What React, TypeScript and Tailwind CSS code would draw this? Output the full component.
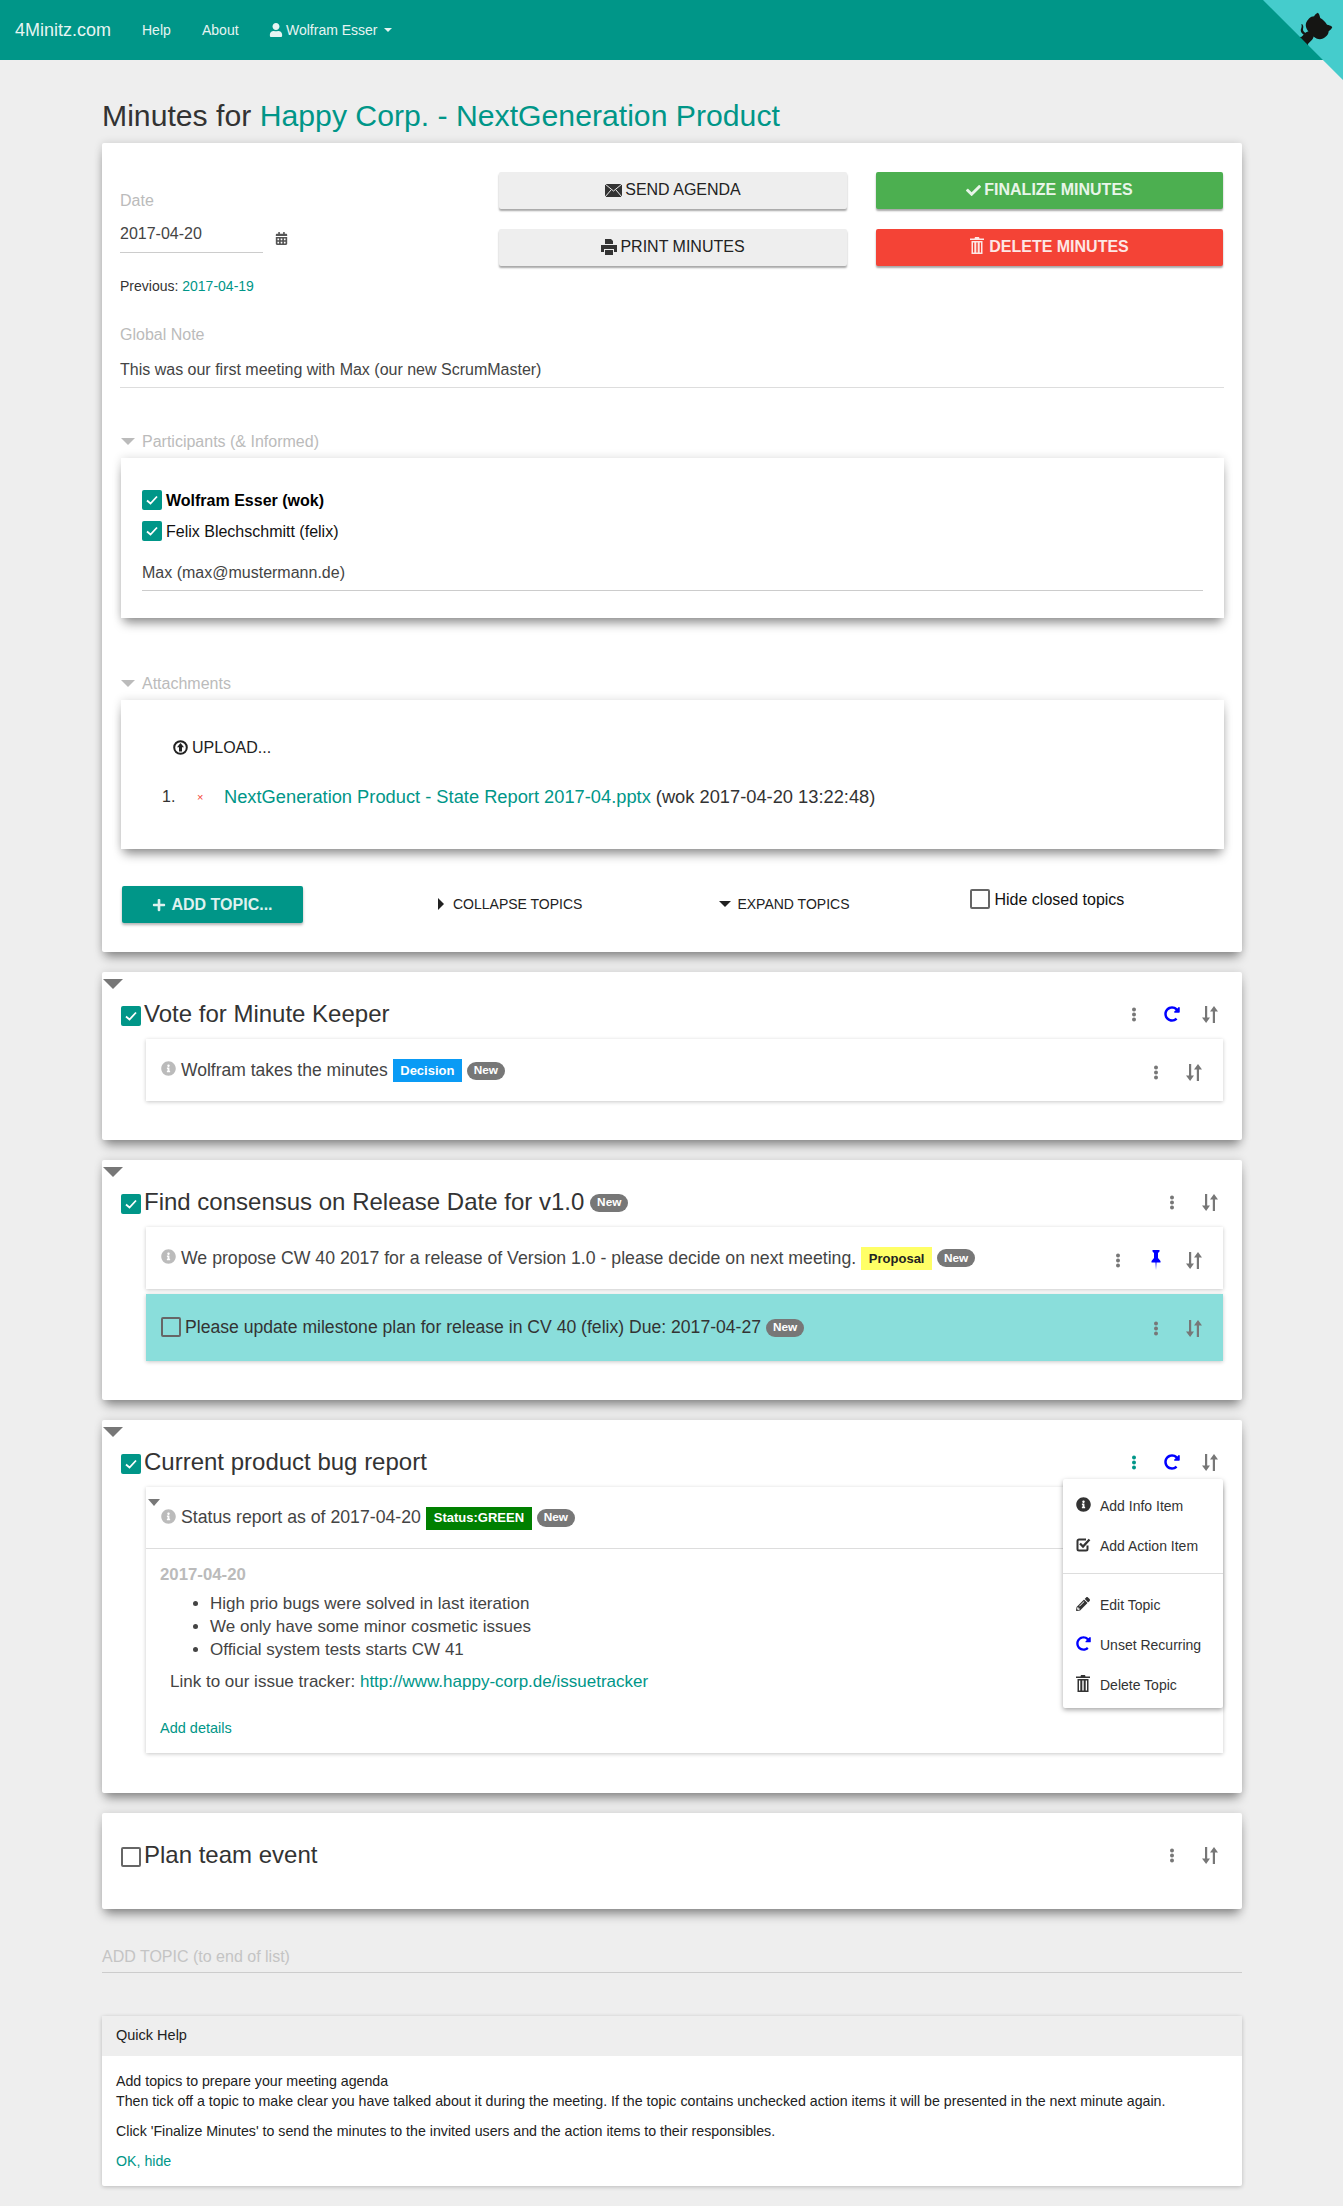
import React from "react";
import { FaCheck, FaPlus, FaUser, FaInfoCircle, FaPencilAlt, FaRedoAlt, FaCalendarAlt } from "react-icons/fa";

const Dots = ({ c = "#777" }: { c?: string }) => (
  <svg width="6" height="15" viewBox="0 0 6 15"><circle cx="3" cy="2.5" r="2" fill={c} /><circle cx="3" cy="7.5" r="2" fill={c} /><circle cx="3" cy="12.5" r="2" fill={c} /></svg>
);
const Sort = () => (
  <svg width="16" height="17" viewBox="0 0 16 17" fill="#777"><path d="M3 0h2.2v11.5H8L4.1 17 0 11.5h3z" /><path d="M10.8 17H13V5.5h3L12 0 8 5.5h2.800z" /></svg>
);
const Repeat = ({ size = 16 }: { size?: number }) => <FaRedoAlt size={size} color="#0000ff" />;
const Pin = () => (
  <svg width="10" height="20" viewBox="0 0 10 20" fill="#0000ff"><path d="M1.500 0h7v1.500L7 3v5l2.500 3v1.500H5.500L5 20l-.5-7.500H.5V11L3 8V3L1.500 1.500z" /></svg>
);
const Trash = ({ c = "#333", w = 14, h = 17 }: { c?: string; w?: number; h?: number }) => (
  <svg width={w} height={h} viewBox="0 0 14 17" fill={c}><path d="M5 0h4l.5 1.500H14V3H0V1.500h4.500zM1.500 4h11v13h-11zm1.500 1.500v10h1.300v-10zm3.300 0v10h1.400v-10zm3.400 0v10H11v-10z" fillRule="evenodd" /></svg>
);
const Envelope = () => (
  <svg width="17" height="13" viewBox="0 0 17 13"><rect width="17" height="13" fill="#333" /><path d="M0 0l8.500 7L17 0M0 13l6-7M17 13l-6-7" stroke="#eee" strokeWidth="1" fill="none" /></svg>
);
const Printer = () => (
  <svg width="16" height="16" viewBox="0 0 16 16" fill="#333"><path d="M4 0h6l2 2v3H4z" /><path d="M0 6h16v7h-3v-3H3v3H0z" /><path d="M4 11h8v5H4z" /></svg>
);
const CheckSq = () => (
  <svg width="15" height="15" viewBox="0 0 15 15" fill="none"><path d="M11.500 8.500V12a1.500 1.500 0 0 1-1.500 1.500H3A1.500 1.500 0 0 1 1.500 12V4A1.500 1.500 0 0 1 3 2.500h7" stroke="#333" strokeWidth="2" /><path d="M4 6.500l3 3 6.500-7" stroke="#333" strokeWidth="2.300" /></svg>
);
const Upload = () => (
  <svg width="15" height="15" viewBox="0 0 15 15"><circle cx="7.500" cy="7.500" r="6.300" fill="none" stroke="#222" strokeWidth="2" /><path d="M7.500 3L11 7.200H9V11.500H6V7.200H4z" fill="#222" /></svg>
);
const Tri = ({ className }: { className: string }) => <span className={"block w-0 h-0 border-l-transparent border-r-transparent border-b-0 " + className} />;

const Check = ({ on = true, size = 20, h = 20 }: { on?: boolean; size?: number; h?: number }) =>
  on ? (
    <span style={{ width: size, height: h }} className="shrink-0 flex items-center justify-center rounded-[2px] bg-[#009688]">
      <svg width="12" height="10" viewBox="0 0 12 10"><path d="M1 5.500l3.500 3L11 1.500" fill="none" stroke="#fff" strokeWidth="1.800" /></svg>
    </span>
  ) : (
    <span style={{ width: size, height: h }} className="shrink-0 block rounded-[2px] border-2 border-[#666]" />
  );

const NewBadge = () => (
  <span className="ml-[5px] mt-[1px] inline-flex h-[18px] w-[38px] shrink-0 items-center justify-center rounded-[9px] bg-[#777] text-[11.800px] font-bold text-white">New</span>
);
const Label = ({ bg, c, w, children }: { bg: string; c: string; w: number; children: React.ReactNode }) => (
  <span style={{ background: bg, color: c, width: w }} className="ml-[5px] mt-[1px] inline-flex h-[23px] shrink-0 items-center justify-center text-[13px] font-bold">{children}</span>
);
const cardShadow = "shadow-[0_8px_10px_-3px_rgba(0,0,0,0.4),0_0_9px_rgba(0,0,0,0.14)]";

const Topic = ({ title, check = true, tri = true, dotsC, repeat, badge, h, children }: any) => (
  <section style={{ height: h }} className={"relative rounded-[2px] bg-white " + cardShadow}>
    {tri && <Tri className="absolute left-[1px] top-[7px] border-l-[10px] border-r-[10px] border-t-[10px] border-t-[#777]" />}
    <div className="flex h-[67px] items-start pl-[19px] pr-[13px] pt-[24px]">
      <div className="flex h-[36px] flex-1 items-center">
        <span className="mt-[4px]"><Check on={check} /></span>
        <h3 className="ml-[3px] text-[24px] font-normal leading-[36px] text-[#333]">{title}</h3>
        {badge && <span className="ml-[1px] flex"><NewBadge /></span>}
      </div>
      <div className="flex h-[36px] items-center">
        <span className="flex w-[38px] justify-center"><Dots c={dotsC} /></span>
        {repeat && <span className="flex w-[38px] justify-center"><Repeat /></span>}
        <span className="flex w-[38px] justify-center"><Sort /></span>
      </div>
    </div>
    <div className="flex flex-col gap-[5px] pl-[44px] pr-[19px]">{children}</div>
  </section>
);

const ItemCtl = ({ pin }: { pin?: boolean }) => (
  <div className="flex items-center pr-[10px] pt-[4px]">
    <span className="flex w-[38px] justify-center"><Dots /></span>
    {pin && <span className="flex w-[38px] justify-center"><Pin /></span>}
    <span className="flex w-[38px] justify-center"><Sort /></span>
  </div>
);

const Info = () => <FaInfoCircle size={15} color="#bbb" className="mb-[3px] mr-[5px] shrink-0" />;

const MenuItem = ({ icon, children, top }: any) => (
  <div style={{ marginTop: top }} className="flex h-[20px] items-center text-[14px] text-[#333]">
    <span className="mb-[3px] flex w-[37px] justify-center pl-[3px]">{icon}</span>
    <span>{children}</span>
  </div>
);

export default function App() {
  return (
    <div className="relative min-h-[2206px] overflow-hidden bg-[#eeeeee] font-['Liberation_Sans',Arial,sans-serif] text-[#333]">
      <nav className="flex h-[60px] items-center bg-[#009688] pl-[15px] text-[14px] text-[#e6f4f2]">
        <span className="w-[127px] text-[18px]">4Minitz.com</span>
        <span className="w-[60px]">Help</span>
        <span className="w-[67px]">About</span>
        <span className="flex items-center">
          <FaUser size={14} className="mr-[3px]" />
          Wolfram Esser
          <Tri className="ml-[6px] border-l-[4px] border-r-[4px] border-t-[4px] border-t-[#e6f4f2]" />
        </span>
      </nav>
      <svg width="80" height="80" viewBox="0 0 250 250" className="absolute right-0 top-0">
        <path d="M0,0 L115,115 L130,115 L142,142 L250,250 L250,0 Z" fill="#45cccc" />
        <path d="M128.3,109.0 C113.8,99.7 119.0,89.6 119.0,89.6 C122.0,82.7 120.5,78.6 120.5,78.6 C119.2,72.0 123.4,76.3 123.4,76.3 C127.3,80.9 125.5,87.3 125.5,87.3 C122.9,97.6 130.6,101.9 134.4,103.2" fill="#151513" />
        <path d="M115.0,115.0 C114.9,115.1 118.7,116.5 119.8,115.4 L133.7,101.6 C136.9,99.2 139.9,98.4 142.2,98.6 C133.8,88.0 127.5,74.4 143.8,58.0 C148.5,53.4 154.0,51.2 159.7,51.0 C160.3,49.4 163.2,43.6 171.4,40.1 C171.4,40.1 176.1,42.5 178.8,56.2 C183.1,58.6 187.2,61.8 190.9,65.4 C194.5,69.0 197.7,73.2 200.1,77.6 C213.8,80.2 216.3,84.9 216.3,84.9 C212.7,93.1 206.9,96.0 205.4,96.6 C205.1,102.4 203.0,107.8 198.3,112.5 C181.9,128.9 168.3,122.5 157.7,114.1 C157.9,116.9 156.7,120.9 152.7,124.9 L141.0,136.5 C139.8,137.7 141.6,141.9 141.8,141.8 Z" fill="#151513" />
      </svg>

      <main className="ml-[102px] w-[1140px]">
        <h2 className="mt-[36px] h-[40px] text-[30.200px] font-normal leading-[40px] text-[#333]">
          Minutes for <span className="text-[#009688]">Happy Corp. - NextGeneration Product</span>
        </h2>

        {/* Meta card */}
        <section className={"mt-[7px] rounded-[2px] bg-white px-[18px] pb-[29px] " + cardShadow}>
          <div className="flex h-[152px]">
            <div className="w-[379px] pt-[48px]">
              <div className="text-[16px] leading-[20px] text-[#bbb]">Date</div>
              <div className="mt-[9px] flex items-start">
                <div className="h-[33px] w-[143px] border-b border-[#ccc] pt-[2px] text-[16px] leading-[24px] text-[#444]">2017-04-20</div>
                <FaCalendarAlt size={13} color="#555" className="ml-[12px] mt-[12px]" />
              </div>
              <div className="mt-[23px] text-[14px] leading-[20px] text-[#333]">
                Previous: <span className="text-[#009688]">2017-04-19</span>
              </div>
            </div>
            <div className="flex w-[348px] flex-col gap-[20px] pt-[29px]">
              <button className="flex h-[37px] items-center justify-center gap-[3px] rounded-[2px] bg-[#eee] pb-[1px] text-[16px] text-[#222] shadow-[0_2px_2px_rgba(0,0,0,0.35)]"><Envelope />SEND AGENDA</button>
              <button className="flex h-[37px] items-center justify-center gap-[3px] rounded-[2px] bg-[#eee] pb-[1px] text-[16px] text-[#222] shadow-[0_2px_2px_rgba(0,0,0,0.35)]"><Printer />PRINT MINUTES</button>
            </div>
            <div className="ml-[29px] flex w-[347px] flex-col gap-[20px] pt-[29px]">
              <button className="flex h-[37px] items-center justify-center gap-[3px] rounded-[2px] bg-[#4caf50] pb-[1px] text-[16px] font-bold text-[#e8f5e9] shadow-[0_2px_2px_rgba(0,0,0,0.35)]"><FaCheck size={15} />FINALIZE MINUTES</button>
              <button className="flex h-[37px] items-center justify-center gap-[5px] rounded-[2px] bg-[#f44336] pb-[1px] text-[16px] font-bold text-[#fde7e5] shadow-[0_2px_2px_rgba(0,0,0,0.35)]"><span className="mb-[3px]"><Trash c="#fde7e5" /></span>DELETE MINUTES</button>
            </div>
          </div>

          <div className="mt-[30px] text-[16px] leading-[20px] text-[#bbb]">Global Note</div>
          <div className="mt-[15px] border-b border-[#ddd] pb-[7px] text-[16px] leading-[20px] text-[#444]">This was our first meeting with Max (our new ScrumMaster)</div>

          <div className="mt-[43px] flex h-[20px] items-center text-[16px] text-[#bbb]">
            <Tri className="ml-[1px] mr-[7px] border-l-[7px] border-r-[7px] border-t-[7px] border-t-[#bbb]" />
            <span className="pt-[2px]">Participants (&amp; Informed)</span>
          </div>
          <div className={"ml-[1px] mt-[7px] h-[160px] bg-white px-[21px] pt-[32px] " + cardShadow}>
            <div className="flex h-[20px] items-center text-[16px] font-bold text-black"><Check /><span className="ml-[4px] pt-[2px]">Wolfram Esser (wok)</span></div>
            <div className="mt-[11px] flex h-[20px] items-center text-[16px] text-[#111]"><Check /><span className="ml-[4px] pt-[2px]">Felix Blechschmitt (felix)</span></div>
            <div className="mt-[21px] h-[29px] border-b border-[#ccc] pt-[1px] text-[16px] leading-[20px] text-[#444]">Max (max@mustermann.de)</div>
          </div>

          <div className="mt-[55px] flex h-[20px] items-center text-[16px] text-[#bbb]">
            <Tri className="ml-[1px] mr-[7px] border-l-[7px] border-r-[7px] border-t-[7px] border-t-[#bbb]" />
            <span className="pt-[2px]">Attachments</span>
          </div>
          <div className={"ml-[1px] mt-[7px] h-[149px] bg-white pl-[41px] pt-[37px] " + cardShadow}>
            <div className="flex h-[20px] items-center gap-[4px] pl-[11px] text-[16px] text-[#222]"><Upload /><span className="pt-[2px]">UPLOAD...</span></div>
            <div className="mt-[30px] flex h-[20px] items-center text-[18.300px] text-[#333]">
              <span className="w-[35px] text-[16px]">1.</span>
              <span className="w-[27px] text-[11px] leading-none text-[#f44336]">×</span>
              <span className="text-[#009688]">NextGeneration Product - State Report 2017-04.pptx</span>
              <span className="ml-[5px]">(wok 2017-04-20 13:22:48)</span>
            </div>
          </div>

          <div className="ml-[2px] mt-[37px] flex h-[37px] items-start">
            <button className="flex h-[37px] w-[181px] items-center justify-center gap-[5px] rounded-[2px] bg-[#009688] text-[16px] font-bold text-[#dff1ef] shadow-[0_2px_3px_rgba(0,0,0,0.3)]"><FaPlus size={14} />ADD TOPIC...</button>
            <div className="ml-[135px] mt-[8px] flex h-[20px] items-center text-[14px] text-[#222]">
              <span className="mr-[9px] h-0 w-0 border-y-[6px] border-l-[6px] border-y-transparent border-l-[#222]" />COLLAPSE TOPICS
            </div>
            <div className="ml-[137px] mt-[8px] flex h-[20px] items-center text-[14px] text-[#222]">
              <Tri className="mr-[6px] border-l-[6px] border-r-[6px] border-t-[6px] border-t-[#222]" />EXPAND TOPICS
            </div>
            <div className="ml-[121px] mt-[3px] flex h-[20px] items-center text-[16px] text-[#111]"><Check on={false} /><span className="ml-[4px] pt-[2px]">Hide closed topics</span></div>
          </div>
        </section>

        <div className="mt-[20px] flex flex-col gap-[20px]">
          <Topic title="Vote for Minute Keeper" repeat h={168}>
            <div className="flex h-[62px] items-center justify-between bg-white pl-[15px] shadow-[0_1px_4px_rgba(0,0,0,0.22)]">
              <div className="flex items-center text-[17.500px] text-[#444]">
                <Info />Wolfram takes the minutes
                <Label bg="#0a9bf5" c="#fff" w={69}>Decision</Label>
                <NewBadge />
              </div>
              <ItemCtl />
            </div>
          </Topic>

          <Topic title="Find consensus on Release Date for v1.0" badge h={240}>
            <div className="flex h-[62px] items-center justify-between bg-white pl-[15px] shadow-[0_1px_4px_rgba(0,0,0,0.22)]">
              <div className="flex items-center text-[17.700px] text-[#444]">
                <Info />We propose CW 40 2017 for a release of Version 1.0 - please decide on next meeting.
                <Label bg="#ffff66" c="#222" w={71}>Proposal</Label>
                <NewBadge />
              </div>
              <ItemCtl pin />
            </div>
            <div className="flex h-[67px] items-center justify-between bg-[#8adedb] pl-[15px] shadow-[0_1px_4px_rgba(0,0,0,0.22)]">
              <div className="flex items-center text-[17.600px] text-[#333]">
                <Check on={false} /><span className="ml-[4px]">Please update milestone plan for release in CV 40 (felix) Due: 2017-04-27</span>
                <NewBadge />
              </div>
              <div className="-mt-[3px]"><ItemCtl /></div>
            </div>
          </Topic>

          <Topic title="Current product bug report" repeat dotsC="#009688" h={373}>
            <div className="relative h-[266px] bg-white shadow-[0_1px_4px_rgba(0,0,0,0.22)]">
              <Tri className="absolute left-[2px] top-[12px] border-l-[6px] border-r-[6px] border-t-[7px] border-t-[#777]" />
              <div className="flex h-[62px] items-center border-b border-[#ddd] pl-[15px] text-[17.700px] text-[#444]">
                <Info />Status report as of 2017-04-20
                <Label bg="#008000" c="#fff" w={106}>Status:GREEN</Label>
                <NewBadge />
              </div>
              <div className="pl-[14px] text-[17px] leading-[23px] text-[#444]">
                <div className="mt-[16px] text-[16.800px] font-bold leading-[20px] text-[#bbb]">2017-04-20</div>
                <ul className="mt-[7px] list-disc pl-[50px]">
                  <li>High prio bugs were solved in last iteration</li>
                  <li>We only have some minor cosmetic issues</li>
                  <li>Official system tests starts CW 41</li>
                </ul>
                <div className="ml-[10px] mt-[9px]">Link to our issue tracker: <span className="text-[#009688]">http://www.happy-corp.de/issuetracker</span></div>
                <div className="mt-[25px] text-[14.500px] leading-[20px] text-[#009688]">Add details</div>
              </div>
            </div>
            <div className="absolute left-[961px] top-[59px] h-[229px] w-[160px] rounded-[2px] bg-white pt-[17px] shadow-[0_2px_5px_rgba(0,0,0,0.35)]">
              <MenuItem icon={<FaInfoCircle size={15} color="#333" />}>Add Info Item</MenuItem>
              <MenuItem top={20} icon={<CheckSq />}>Add Action Item</MenuItem>
              <div className="mt-[17px] h-px bg-[#ddd]" />
              <MenuItem top={21} icon={<FaPencilAlt size={14} color="#333" />}>Edit Topic</MenuItem>
              <MenuItem top={20} icon={<Repeat size={15} />}>Unset Recurring</MenuItem>
              <MenuItem top={20} icon={<Trash />}>Delete Topic</MenuItem>
            </div>
          </Topic>

          <Topic title="Plan team event" check={false} tri={false} h={96} />
        </div>

        <div className="mt-[38px] h-[26px] border-b border-[#ccc] text-[16px] leading-[20px] text-[#c4c4c4]">ADD TOPIC (to end of list)</div>

        <section className="mt-[43px] h-[170px] rounded-[2px] bg-white shadow-[0_1px_4px_rgba(0,0,0,0.22)]">
          <div className="flex h-[40px] items-center bg-[#eee] px-[14px] text-[14.500px] text-[#222]">Quick Help</div>
          <div className="px-[14px] pt-[15px] text-[14.200px] leading-[20px] text-[#222]">
            <div>Add topics to prepare your meeting agenda</div>
            <div>Then tick off a topic to make clear you have talked about it during the meeting. If the topic contains unchecked action items it will be presented in the next minute again.</div>
            <div className="mt-[10px]">Click 'Finalize Minutes' to send the minutes to the invited users and the action items to their responsibles.</div>
            <div className="mt-[10px] text-[#009688]">OK, hide</div>
          </div>
        </section>
      </main>
    </div>
  );
}
